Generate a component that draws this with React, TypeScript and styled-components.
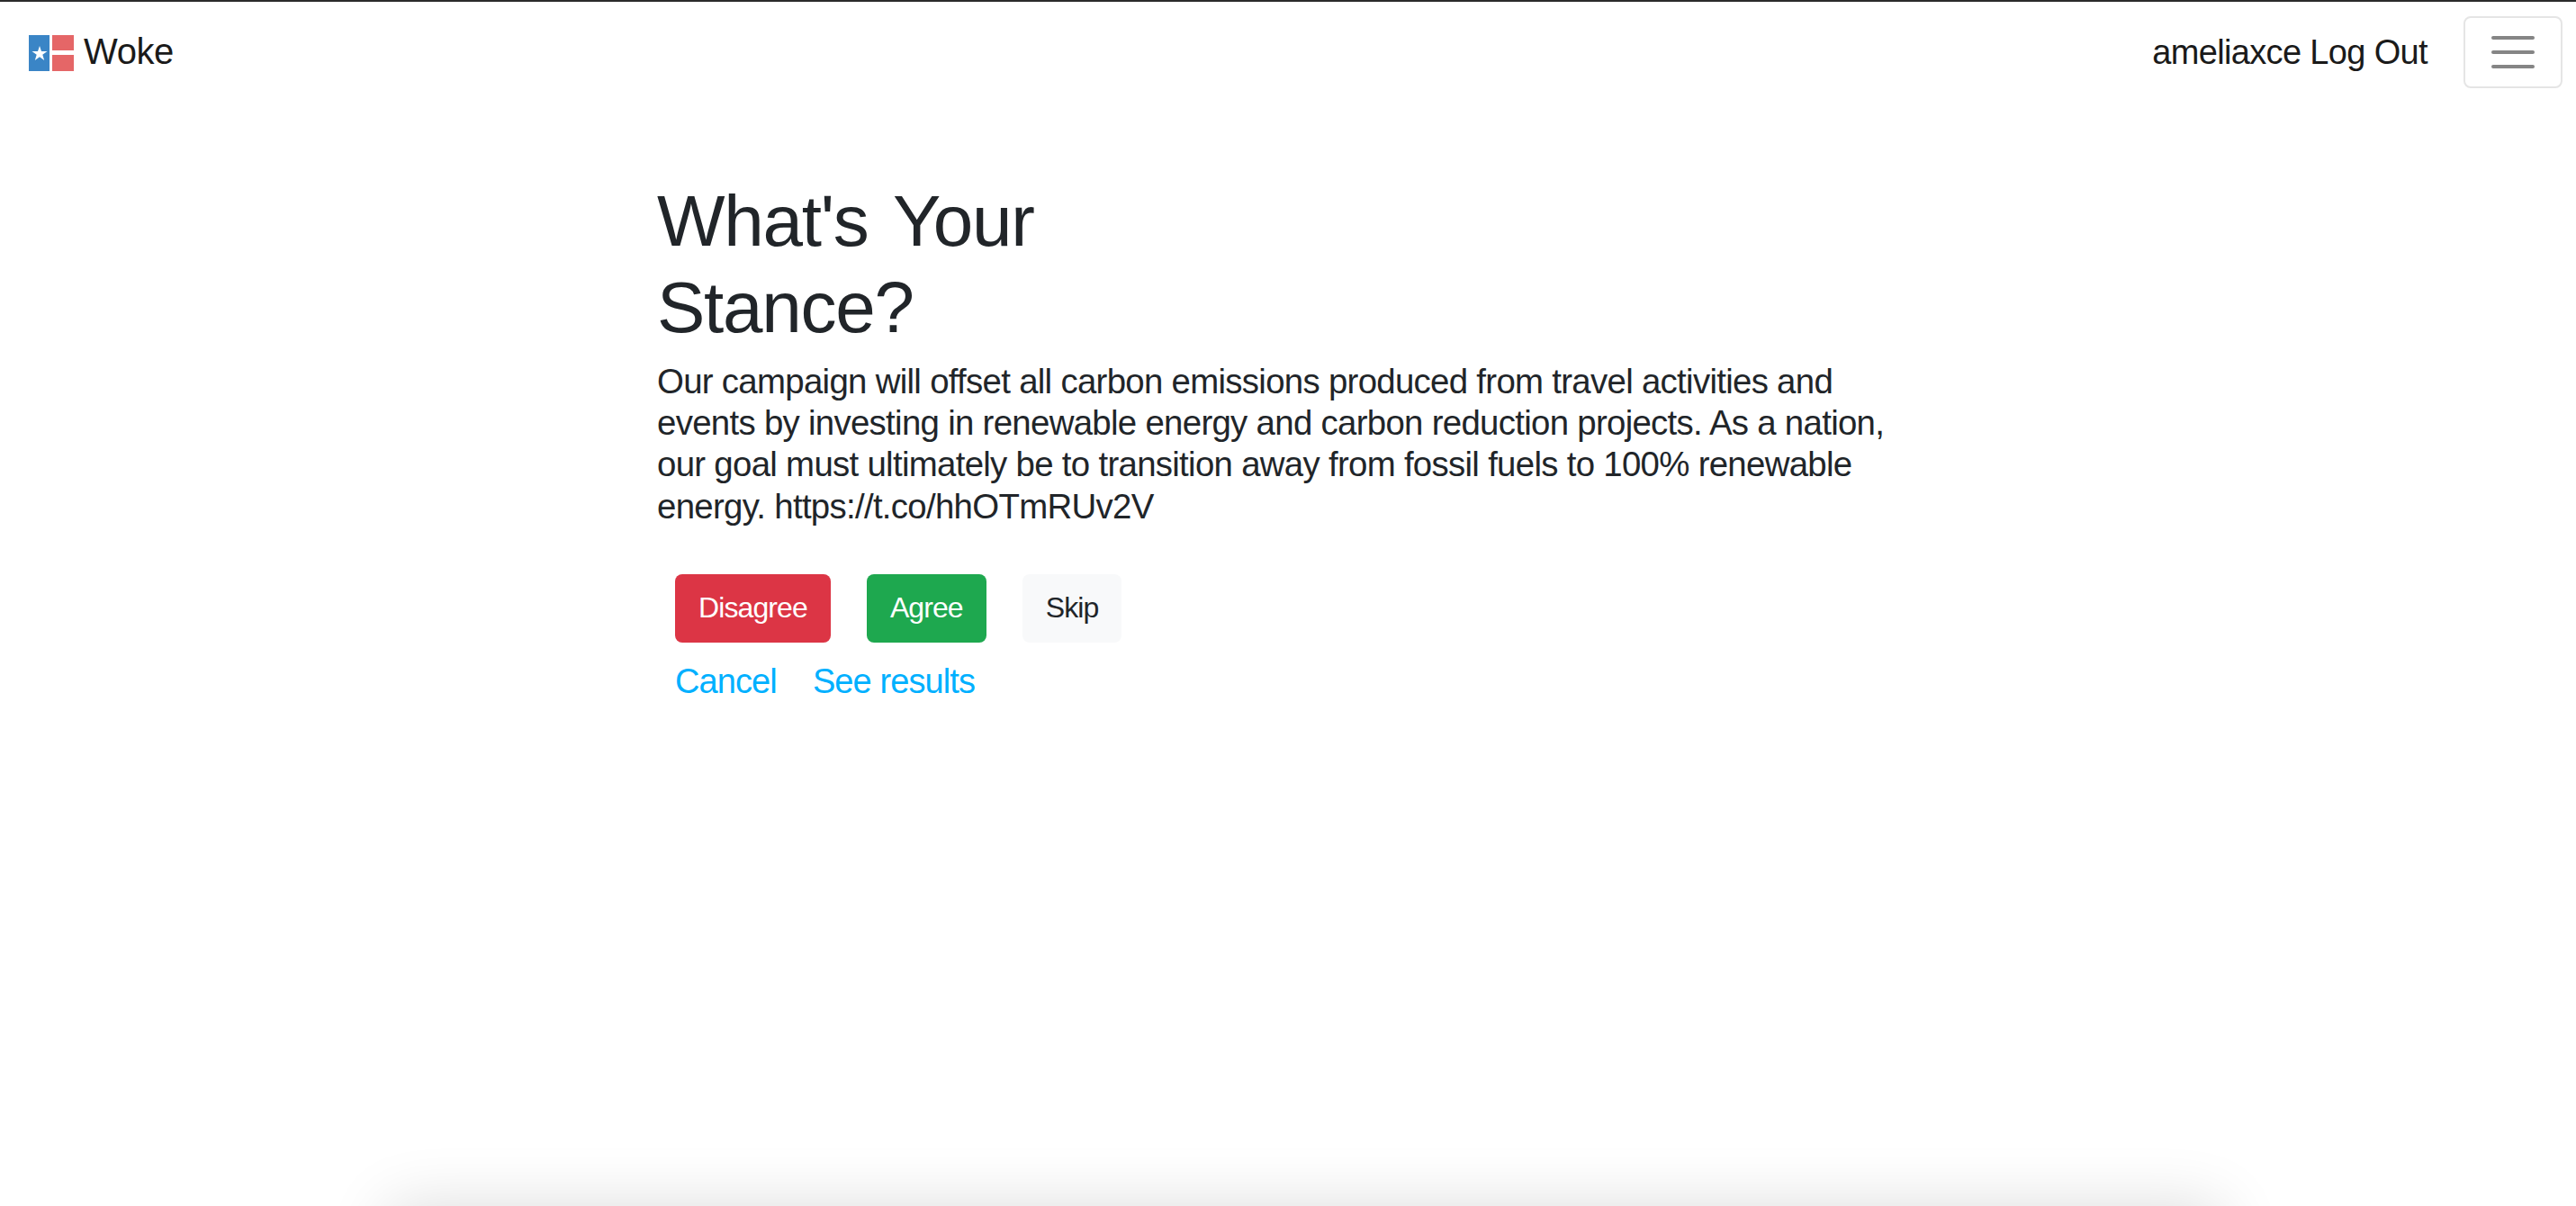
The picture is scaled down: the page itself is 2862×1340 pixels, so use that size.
import styled, { createGlobalStyle } from "styled-components";

const GlobalStyle = createGlobalStyle`
  html, body {
    margin: 0;
    padding: 0;
    background: #fff;
    overflow: hidden;
  }
  body {
    font-family: "Liberation Sans", Arial, sans-serif;
    color: #212529;
  }
`;

const Page = styled.div`
  height: 1340px;
  display: flex;
  flex-direction: column;
  overflow: hidden;
`;

const Navbar = styled.nav`
  flex: none;
  border-top: 2px solid #2b2b2b;
  height: 114px;
  box-sizing: border-box;
  padding: 16px 15px 0 32px;
  display: flex;
  align-items: flex-start;
  justify-content: space-between;
`;

const Brand = styled.a`
  display: flex;
  align-items: center;
  gap: 11px;
  height: 78px;
  font-size: 40px;
  letter-spacing: -0.4px;
  color: #1a1a1a;
`;

const LogoMark = styled.svg`
  margin-top: 4px;
`;

const NavRight = styled.div`
  display: flex;
  align-items: center;
  gap: 40px;
  height: 80px;
`;

const UserText = styled.span`
  font-size: 38px;
  letter-spacing: -0.65px;
  color: #1a1a1a;
`;

const Toggler = styled.button`
  width: 110px;
  height: 80px;
  padding: 0;
  background: #fff;
  border: 2px solid #e5e5e5;
  border-radius: 8px;
  display: flex;
  flex-direction: column;
  align-items: center;
  justify-content: center;
  gap: 12px;
`;

const TogglerBar = styled.span`
  display: block;
  width: 48px;
  height: 4px;
  border-radius: 2px;
  background: #858585;
`;

const Main = styled.main`
  flex: none;
  height: 1226px;
  box-sizing: border-box;
  padding: 84px 0 0 730px;
`;

const Title = styled.h1`
  margin: 0;
  font-size: 80px;
  font-weight: 400;
  line-height: 96px;
  letter-spacing: -1.26px;
  word-spacing: 8px;
  color: #212529;
  width: 600px;
`;

const Body = styled.p`
  margin: 11px 0 0;
  width: 1370px;
  font-size: 38.4px;
  line-height: 46.2px;
  letter-spacing: -0.7px;
  color: #212529;
`;

const Actions = styled.div`
  margin: 52px 0 0 20px;
  display: flex;
  gap: 40px;
`;

const ActionButton = styled.button<{ $bg: string; $fg: string }>`
  height: 76px;
  padding: 0 26px;
  border: 0;
  border-radius: 8px;
  background: ${({ $bg }) => $bg};
  color: ${({ $fg }) => $fg};
  font-family: inherit;
  font-size: 32px;
  letter-spacing: -0.9px;
`;

const Links = styled.div`
  margin: 20px 0 0 20px;
  display: flex;
  gap: 40px;
`;

const TextLink = styled.a`
  font-size: 38px;
  line-height: 46px;
  letter-spacing: -0.9px;
  color: #00b0ff;
`;

const BottomSheet = styled.div`
  flex: none;
  width: 2036px;
  height: 200px;
  margin-left: 432px;
  background: #ececec;
  box-shadow: 0 0 70px rgba(0, 0, 0, 0.14);
`;

const FlagLogo = () => (
  <LogoMark width="50" height="40" viewBox="0 0 50 40" aria-hidden="true">
    <rect x="0" y="0" width="23" height="40" fill="#3a85c6" />
    <rect x="26" y="0" width="24" height="17" fill="#e56667" />
    <rect x="26" y="22" width="24" height="18" fill="#e56667" />
    <polygon
      fill="#fff"
      points="12,12 14,18 20.5,18 15.3,21.8 17.2,28 12,24.2 6.800,28 8.700,21.800 3.500,18 10,18"
    />
  </LogoMark>
);

const App = () => {
  return (
    <Page>
      <GlobalStyle />
      <Navbar>
        <Brand>
          <FlagLogo />
          Woke
        </Brand>
        <NavRight>
          <UserText>ameliaxce Log Out</UserText>
          <Toggler aria-label="Toggle navigation">
            <TogglerBar />
            <TogglerBar />
            <TogglerBar />
          </Toggler>
        </NavRight>
      </Navbar>
      <Main>
        <Title>What's Your Stance?</Title>
        <Body>
          Our campaign will offset all carbon emissions produced from travel
          activities and events by investing in renewable energy and carbon
          reduction projects. As a nation, our goal must ultimately be to
          transition away from fossil fuels to 100% renewable energy.
          https://t.co/hhOTmRUv2V
        </Body>
        <Actions>
          <ActionButton $bg="#dc3545" $fg="#fff">
            Disagree
          </ActionButton>
          <ActionButton $bg="#1ea84f" $fg="#fff">
            Agree
          </ActionButton>
          <ActionButton $bg="#f8f9fa" $fg="#212529">
            Skip
          </ActionButton>
        </Actions>
        <Links>
          <TextLink>Cancel</TextLink>
          <TextLink>See results</TextLink>
        </Links>
      </Main>
      <BottomSheet />
    </Page>
  );
};

export default App;
